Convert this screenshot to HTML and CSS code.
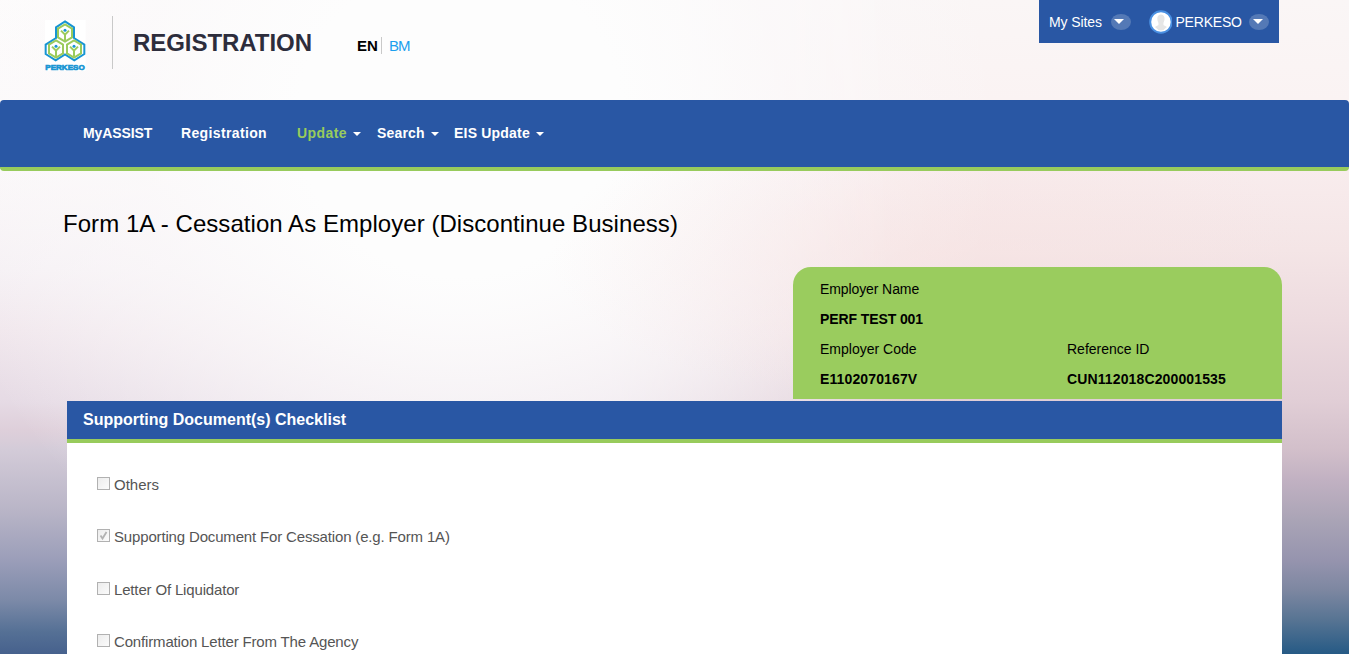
FILE: index.html
```html
<!DOCTYPE html>
<html lang="en">
<head>
<meta charset="utf-8">
<title>Registration</title>
<link rel="stylesheet" href="styles.css">
</head>
<body>
<div class="page">
  <header class="header">
    <svg class="logo" viewBox="27 27 126 156">
      <path d="M30 30h122v152H30z" fill="#fff"/>
      <path d="M90 34L117 52V84L148 104V132L118 151L90 133L62 151L32 132V104L63 84V52Z" fill="#fff" stroke="#1795d3" stroke-width="6"/>
      <defs>
        <g id="cell" fill="none" stroke="#9bcb5c" stroke-width="6">
          <path d="M0-26L21-13V13L0 26L-21 13V-13Z"/>
          <path d="M-12-7L0 5L12-7M0 4V23" stroke-width="6"/>
          <circle cx="0" cy="-8" r="4.500" fill="#1795d3" stroke="none"/>
        </g>
      </defs>
      <use href="#cell" x="90" y="69"/>
      <use href="#cell" x="63" y="117"/>
      <use href="#cell" x="117" y="117"/>
      <text class="logo-name" x="31" y="179" textLength="118" lengthAdjust="spacingAndGlyphs">PERKESO</text>
    </svg>
    <div class="divider"></div>
    <h1 class="app-name">REGISTRATION</h1>
    <div class="languages"><b class="lang-current">EN</b><a class="lang-other">BM</a></div>
    <div class="account">
      <span class="sites">My Sites</span>
      <span class="pill"><i class="caret big"></i></span>
      <svg class="avatar" viewBox="0 0 24 24">
        <circle cx="12" cy="12" r="10.800" fill="#fff" stroke="#4a90e2" stroke-width="2"/>
        <path d="M9 6Q12 3 15 6Q16.500 9 14.500 13V15L18 17Q15 20.500 12 20.500Q9 20.500 6 17L9.500 15V13Q7.500 9 9 6Z" fill="#e6e6e6"/>
      </svg>
      <span class="user">PERKESO</span>
      <span class="pill"><i class="caret big"></i></span>
    </div>
  </header>
  <nav class="nav">
    <a class="n1">MyASSIST</a>
    <a class="n2">Registration</a>
    <a class="n3 active">Update<i class="caret"></i></a>
    <a class="n4">Search<i class="caret"></i></a>
    <a class="n5">EIS Update<i class="caret"></i></a>
  </nav>
  <main class="main">
    <h2 class="title">Form 1A - Cessation As Employer (Discontinue Business)</h2>
    <section class="employer">
      <span class="wide label">Employer Name</span>
      <b class="wide name">PERF TEST 001</b>
      <span>Employer Code</span><span>Reference ID</span>
      <b class="code">E1102070167V</b><b class="code">CUN112018C200001535</b>
    </section>
    <section class="panel">
      <h3 class="panel-title">Supporting Document(s) Checklist</h3>
      <div class="list">
        <div class="item"><span class="box"></span><span class="others">Others</span></div>
        <div class="item"><span class="box"><svg class="tick" viewBox="0 0 11 11"><path d="M2.500 5.500L4.500 8.500L8.500 2" fill="none" stroke="#b2b2b2" stroke-width="1.800"/></svg></span><span>Supporting Document For Cessation (e.g. Form 1A)</span></div>
        <div class="item"><span class="box"></span><span>Letter Of Liquidator</span></div>
        <div class="item"><span class="box"></span><span>Confirmation Letter From The Agency</span></div>
      </div>
    </section>
  </main>
</div>
</body>
</html>
```
FILE: styles.css
```css
* { box-sizing: border-box; }
body { margin: 0; font: 14px/20px "Liberation Sans", Arial, sans-serif; color: #000; }
.page {
  position: relative;
  z-index: 0;
  height: 654px;
  overflow: hidden;
  background: linear-gradient(#fdfcfc 0, #fbf8f9 170px, #f5f0f4 270px, #f0e6ec 330px, #e6dbe5 400px, #decfda 430px, #d3cbd8 450px, #b9b5c7 510px, #9b9eb9 560px, #7c8aa8 600px, #557095 632px, #46618d 654px);
}
.page::before, .page::after { content: ""; position: absolute; inset: 0; z-index: -1; }
.page::before {
  background: linear-gradient(#faf6f6 0, #faf3f3 100px, #f8eced 170px, #f4e5e6 250px, #eddbdf 320px, #e1ced6 400px, #d2bfca 450px, #c1b1c2 480px, #aaa4b6 520px, #9694ae 560px, #7d87a1 590px, #577493 620px, #265a85 654px);
  -webkit-mask-image: linear-gradient(90deg, transparent 45%, #000 66%);
  mask-image: linear-gradient(90deg, transparent 45%, #000 66%);
}
.page::after {
  background:
    radial-gradient(ellipse 380px 150px at 930px 255px, rgba(248,228,227,.55), rgba(248,228,227,0)),
    radial-gradient(ellipse 540px 520px at 460px 120px, #fdfdfd 30%, rgba(251,249,250,.7) 60%, rgba(251,249,250,0));
}
.header { display: flex; height: 100px; padding: 0 70px 0 44px; align-items: flex-start; }
.logo { width: 42px; height: 52px; margin-top: 19px; }
.logo-name { font: bold 23px "Liberation Sans", Arial, sans-serif; fill: #1795d3; stroke: #1795d3; stroke-width: 2px; }
.divider { width: 1px; height: 53px; margin: 16px 0 0 26px; background: #c9c9c9; }
.app-name { width: 224px; margin: 28px 0 0 20px; font-size: 24px; line-height: 30px; letter-spacing: -.05px; color: #2d2d3c; white-space: nowrap; }
.languages { display: flex; margin-top: 37px; line-height: 17px; font-size: 15px; }
.lang-current { width: 25px; border-right: 1px solid #c9c9c9; }
.lang-other { margin-left: 7px; letter-spacing: -.9px; color: #1ba0ee; }
.account { display: flex; align-items: center; width: 240px; height: 43px; margin-left: auto; padding: 0 10px; background: #2957a4; color: #fff; }
.sites { width: 62px; letter-spacing: -.1px; white-space: nowrap; }
.user { width: 74px; letter-spacing: -.2px; }
.pill { display: grid; place-items: center; width: 20px; height: 16px; border-radius: 50%; background: #5479b6; }
.avatar { width: 24px; height: 24px; margin: 0 3px 0 18px; }
.caret { display: inline-block; border: 4px solid transparent; border-top-color: currentColor; border-bottom: 0; }
.caret.big { border-width: 5px 5px 0; margin-left: -3px; }
.nav { display: flex; height: 71px; padding: 23px 0 0 83px; border-bottom: 4px solid #98cb5c; border-radius: 4px; background: #2957a4; color: #fff; font-weight: bold; white-space: nowrap; }
.nav .caret { margin-left: 6px; vertical-align: 2px; }
.n1 { width: 98px; letter-spacing: -.1px; }
.n2 { width: 116px; letter-spacing: .36px; }
.n3 { width: 80px; letter-spacing: .42px; }
.n4 { width: 77px; letter-spacing: .18px; }
.n5 { letter-spacing: .2px; }
.active { color: #98cb5c; }
.active .caret { color: #fff; }
.main { display: flex; flex-direction: column; padding: 38px 67px 0; }
.title { margin: 0 0 28px -4px; font-size: 24px; line-height: 30px; font-weight: normal; letter-spacing: .05px; white-space: nowrap; }
.employer { display: grid; grid-template-columns: 247px 1fr; grid-auto-rows: 30px; align-self: flex-end; width: 489px; height: 132px; padding: 7px 0 0 27px; border-radius: 18px 18px 0 0; background: #9acc5e; line-height: 30px; }
.wide { grid-column: 1 / 3; }
.label, .name { letter-spacing: -.1px; }
.code { letter-spacing: .13px; }
.panel { width: 1215px; margin-top: 2px; background: #fff; }
.panel-title { height: 42px; margin: 0; padding: 0 16px; border-bottom: 4px solid #98cb5c; background: #2957a4; color: #fff; font-size: 16px; line-height: 37px; }
.list { height: 230px; padding: 31px 30px 0; }
.item { display: flex; height: 52.400px; font-size: 15px; line-height: 22px; letter-spacing: -.16px; color: #555; }
.others { letter-spacing: 0; }
.box { width: 13px; height: 13px; margin: 3px 4px 0 0; border: 1px solid #b1b1b1; background: linear-gradient(135deg, #ececec, #fbfbfb); }
.tick { display: block; width: 11px; height: 11px; }
```
